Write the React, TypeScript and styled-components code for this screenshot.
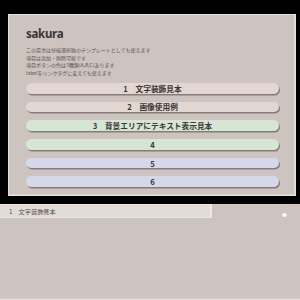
import React from 'react';
import styled, { createGlobalStyle } from 'styled-components';

const GlobalStyle = createGlobalStyle`
  html, body {
    margin: 0;
    padding: 0;
    background: #000;
  }
  body {
    font-family: "Noto Sans", "Noto Sans CJK JP", sans-serif;
  }
`;

type Tone = 'pink' | 'green' | 'blue';

const toneColors: Record<Tone, string> = {
  pink: '#e3d7d3',
  green: '#d6e6d5',
  blue: '#d4d8e8',
};

const Page = styled.div`
  width: 300px;
  height: 300px;
  display: flex;
  flex-direction: column;
  overflow: hidden;
`;

// Black stage with the menu panel
const Stage = styled.div`
  background: #000;
  height: 204px;
  padding: 14px 4px 0 8px;
  box-sizing: border-box;
`;

const Panel = styled.div`
  height: 182px;
  box-sizing: border-box;
  background: #cdc4bf;
  border: 1px solid #e6dfdc;
  box-shadow: inset -1px -1px 0 #ded6d2;
  padding: 11px 16px 0 17px;
  display: flex;
  flex-direction: column;
`;

const Title = styled.h1`
  margin: 0;
  font-family: "Noto Sans", "Noto Sans CJK JP", sans-serif;
  font-size: 11.5px;
  line-height: 15px;
  font-weight: 700;
  letter-spacing: -0.3px;
  color: #3a3535;
`;

const Notes = styled.div`
  margin: 5px 0 6.6px;
  font-family: "Noto Sans CJK JP", sans-serif;
  font-size: 5px;
  line-height: 7.6px;
  color: #5a5250;
`;

const MenuList = styled.div`
  display: flex;
  flex-direction: column;
  gap: 8.1px;
`;

const MenuButton = styled.div<{ $tone: Tone }>`
  height: 10.6px;
  border-radius: 6px;
  background: ${({ $tone }) => toneColors[$tone]};
  box-shadow: 1px 1.5px 0.5px #857c78;
  display: flex;
  align-items: center;
  justify-content: center;
  font-family: "Noto Sans CJK JP", sans-serif;
  font-size: 7.7px;
  font-weight: 700;
  color: #3d3737;
  white-space: pre;
`;

// Lower area with the selected item tab
const Lower = styled.div`
  flex: 1;
  position: relative;
  background: #cdc4bf;
  border-bottom: 1px solid #ebe4e1;
  box-shadow: inset 0 -3px 0 #cfc7c3;
`;

const Tab = styled.div`
  width: 212px;
  height: 14px;
  box-sizing: border-box;
  background: #e2dcd9;
  border-top: 1px solid #ebe6e3;
  border-bottom: 1px solid #ebe6e3;
  border-right: 2px solid #ece8e5;
  padding-left: 9px;
  display: flex;
  align-items: center;
  font-family: "Noto Sans CJK JP", sans-serif;
  font-size: 6.2px;
  color: #554e4c;
  white-space: pre;
`;

const Dot = styled.span`
  position: absolute;
  left: 282px;
  top: 9px;
  width: 5px;
  height: 4px;
  border-radius: 50%;
  background: #f8f6f5;
`;

const items: { label: string; tone: Tone }[] = [
  { label: '1　文字装飾見本', tone: 'pink' },
  { label: '2　画像使用例', tone: 'pink' },
  { label: '3　背景エリアにテキスト表示見本', tone: 'green' },
  { label: '4', tone: 'green' },
  { label: '5', tone: 'blue' },
  { label: '6', tone: 'blue' },
];

export default function App() {
  return (
    <>
      <GlobalStyle />
      <Page>
        <Stage>
          <Panel>
            <Title>sakura</Title>
            <Notes>
              この目次は分岐選択肢のテンプレートとしても使えます
              <br />
              項目は追加・削除可能です
              <br />
              項目ボタンの色は3種類(A,B,C)あります
              <br />
              labelをリンクタグに変えても使えます
            </Notes>
            <MenuList>
              {items.map((item) => (
                <MenuButton key={item.label} $tone={item.tone}>
                  {item.label}
                </MenuButton>
              ))}
            </MenuList>
          </Panel>
        </Stage>
        <Lower>
          <Tab>1　文字装飾見本</Tab>
          <Dot />
        </Lower>
      </Page>
    </>
  );
}
